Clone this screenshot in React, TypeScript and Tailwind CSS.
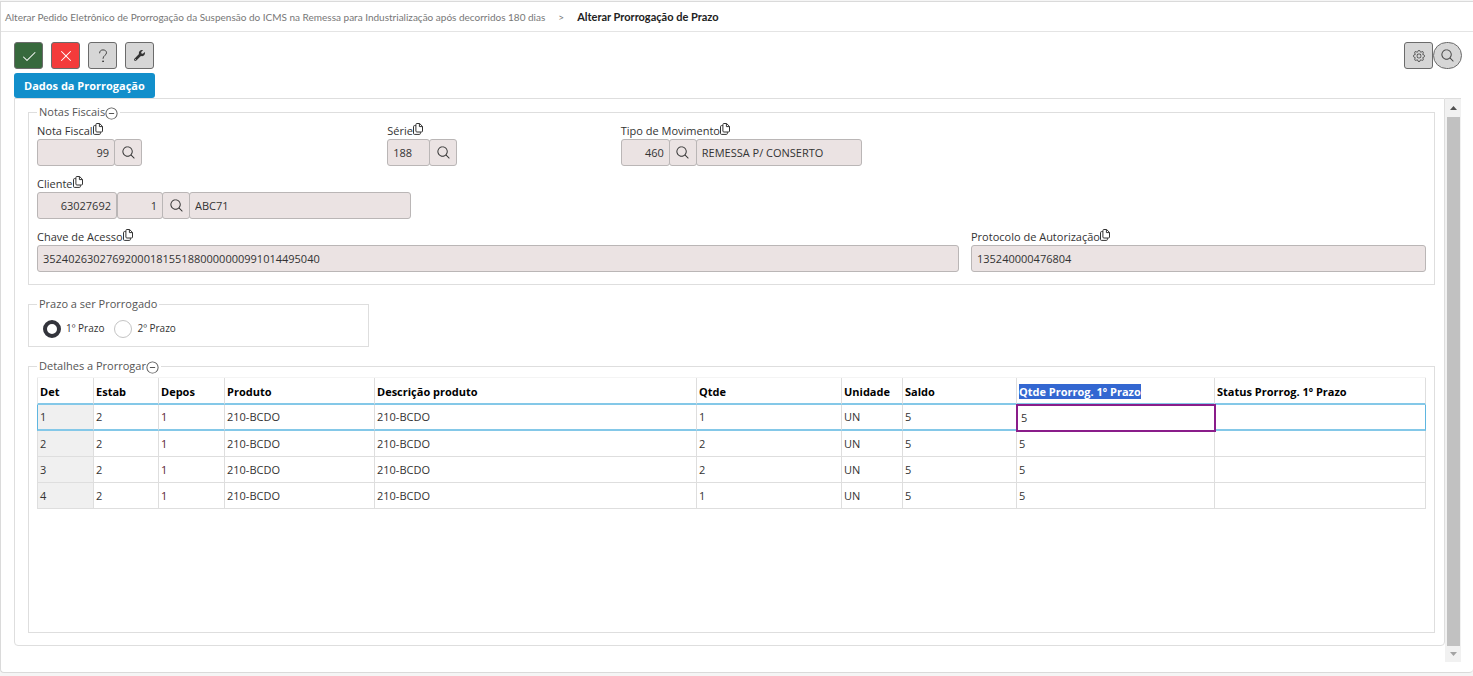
import { useState } from 'react';
import type { ReactNode } from 'react';
import { BsGear } from 'react-icons/bs';
import { FaWrench } from 'react-icons/fa';
import { PiCheck, PiMagnifyingGlass, PiMinusCircle, PiX } from 'react-icons/pi';

interface Detalhe {
  det: number;
  estab: string;
  depos: string;
  produto: string;
  descricao: string;
  qtde: string;
  unidade: string;
  saldo: string;
  prorrogado: string;
  status: string;
}

const detalhes: Detalhe[] = [
  { det: 1, estab: '2', depos: '1', produto: '210-BCDO', descricao: '210-BCDO', qtde: '1', unidade: 'UN', saldo: '5', prorrogado: '5', status: '' },
  { det: 2, estab: '2', depos: '1', produto: '210-BCDO', descricao: '210-BCDO', qtde: '2', unidade: 'UN', saldo: '5', prorrogado: '5', status: '' },
  { det: 3, estab: '2', depos: '1', produto: '210-BCDO', descricao: '210-BCDO', qtde: '2', unidade: 'UN', saldo: '5', prorrogado: '5', status: '' },
  { det: 4, estab: '2', depos: '1', produto: '210-BCDO', descricao: '210-BCDO', qtde: '1', unidade: 'UN', saldo: '5', prorrogado: '5', status: '' },
];

const columns = [
  { title: 'Det', width: 'w-[57px]' },
  { title: 'Estab', width: 'w-[65px]' },
  { title: 'Depos', width: 'w-[66px]' },
  { title: 'Produto', width: 'w-[150px]' },
  { title: 'Descrição produto', width: 'w-[322px]' },
  { title: 'Qtde', width: 'w-[145px]' },
  { title: 'Unidade', width: 'w-[61px]' },
  { title: 'Saldo', width: 'w-[114px]' },
  { title: 'Qtde Prorrog. 1º Prazo', width: 'w-[198px]', selected: true },
  { title: 'Status Prorrog. 1º Prazo', width: '' },
];

function CopyIcon() {
  return (
    <svg className="h-3 w-[10px]" viewBox="0 0 10 12" fill="none" stroke="currentColor" strokeWidth={1} strokeLinejoin="round">
      <path d="M3.9 0.5H6.6L9.5 3.4V8a1 1 0 0 1-1 1H3.9a1 1 0 0 1-1-1V1.5a1 1 0 0 1 1-1Z" />
      <path d="M6.4 0.6V3.6H9.4" />
      <path d="M2.8 2.6H1.5a1 1 0 0 0-1 1V10.4a1 1 0 0 0 1 1H6.4a1 1 0 0 0 1-1V9.2" />
    </svg>
  );
}

function QuestionIcon() {
  return (
    <svg className="h-[14px] w-[14px]" viewBox="0 0 14 14" fill="none" stroke="currentColor" strokeWidth={1} strokeLinecap="round">
      <path d="M3.6 3.9C3.6 2 5 0.9 7 0.9s3.5 1.1 3.5 2.9c0 2.6-3.5 2.6-3.5 5.6" />
      <circle cx="7" cy="12.3" r="0.5" fill="currentColor" />
    </svg>
  );
}

function ToolButton({ label, className, children }: { label: string; className: string; children: ReactNode }) {
  return (
    <button
      type="button"
      aria-label={label}
      className={`flex h-[27px] w-[29px] items-center justify-center border border-[#6b6b6b] ${className}`}
    >
      {children}
    </button>
  );
}

function Field({ id, label, className, children }: { id: string; label: string; className: string; children: ReactNode }) {
  return (
    <div className={className}>
      <div className="flex h-4 items-start text-[#333]">
        <label htmlFor={id}>{label}</label>
        <button type="button" aria-label={`Copiar ${label}`}>
          <CopyIcon />
        </button>
      </div>
      <div className="flex">{children}</div>
    </div>
  );
}

function TextBox({ id, label, value, className }: { id?: string; label?: string; value: string; className: string }) {
  return (
    <input
      id={id}
      aria-label={label}
      type="text"
      readOnly
      value={value}
      className={`h-[27px] min-w-0 rounded-[3px] border border-[#bab6b6] bg-[#ebe3e3] px-[5px] text-[#333] outline-none ${className}`}
    />
  );
}

function LookupButton({ label }: { label: string }) {
  return (
    <button
      type="button"
      aria-label={label}
      className="-ml-px flex h-[27px] w-7 shrink-0 items-center justify-center rounded-[3px] border border-[#bab6b6] bg-[#ebe3e3] pb-px text-[#333]"
    >
      <PiMagnifyingGlass className="h-[15px] w-[15px]" />
    </button>
  );
}

function Legend({ children, collapsible }: { children: ReactNode; collapsible?: boolean }) {
  return (
    <legend className="px-[2px] text-[#555]">
      <span className="flex h-4 items-center">
        {children}
        {collapsible && (
          <button type="button" aria-label="Recolher" className="-mx-px pt-[2px]">
            <PiMinusCircle className="h-[15px] w-[15px]" />
          </button>
        )}
      </span>
    </legend>
  );
}

export default function App() {
  const [prazo, setPrazo] = useState('1');
  const [qtde, setQtde] = useState(detalhes[0].prorrogado);

  return (
    <div className="flex min-h-screen flex-col bg-[#f5f5f5] pt-px pb-[3px] font-['Open_Sans','Noto_Sans',sans-serif] text-[11px] leading-4">
      <main className="flex-1 rounded-b border border-r-0 border-[#dadada] bg-white">
        <nav aria-label="Trilha" className="flex h-[30px] items-center gap-[13px] border-b border-[#e4e4e4] pl-1 font-[Lato,sans-serif]">
          <a href="#pedido" className="text-[10px] text-[#777]">
            Alterar Pedido Eletrônico de Prorrogação da Suspensão do ICMS na Remessa para Industrialização após decorridos 180 dias
          </a>
          <span className="text-[10px] text-[#777]">&gt;</span>
          <span className="font-bold text-[#222]">Alterar Prorrogação de Prazo</span>
        </nav>

        <div className="pt-[10px] pr-[11px] pl-[13px]">
          {/* Toolbar */}
          <div className="flex justify-between">
            <div className="flex gap-2">
              <ToolButton label="Confirmar" className="rounded-[3px] bg-[#37693d] text-white">
                <PiCheck className="h-4 w-4" />
              </ToolButton>
              <ToolButton label="Cancelar" className="rounded-[3px] bg-[#f33b3b] text-white">
                <PiX className="h-4 w-4" />
              </ToolButton>
              <ToolButton label="Ajuda" className="rounded-[3px] bg-[#d6d6d6] text-[#444]">
                <QuestionIcon />
              </ToolButton>
              <ToolButton label="Ferramentas" className="rounded-[3px] bg-[#d6d6d6] text-[#333]">
                <FaWrench className="h-[11px] w-[11px]" />
              </ToolButton>
            </div>
            <div className="flex">
              <ToolButton label="Configurações" className="rounded-[3px] bg-[#d6d6d6] text-[#444]">
                <BsGear className="h-3 w-3" />
              </ToolButton>
              <ToolButton label="Pesquisar" className="rounded-full bg-[#d6d6d6] text-[#444]">
                <PiMagnifyingGlass className="h-[15px] w-[15px]" />
              </ToolButton>
            </div>
          </div>

          <div role="tablist" className="mt-1 flex">
            <button
              type="button"
              role="tab"
              aria-selected="true"
              className="h-[25px] rounded-[3px] bg-[#128fcb] px-[10px] pt-px font-bold text-white"
            >
              Dados da Prorrogação
            </button>
          </div>

          <div className="flex pb-[10px]">
            <section className="mb-4 min-w-0 flex-1 rounded-b border border-[#dedede] pt-[5px] pr-[9px] pb-3 pl-[13px]">
              <fieldset className="border border-[#dedede] px-2 pt-[3px] pb-3">
                <Legend collapsible>Notas Fiscais</Legend>
                <div className="grid grid-cols-12 gap-x-3 gap-y-[10px]">
                  <Field id="nota" label="Nota Fiscal" className="col-span-3">
                    <TextBox id="nota" value="99" className="w-[78px] text-right" />
                    <LookupButton label="Buscar nota fiscal" />
                  </Field>
                  <Field id="serie" label="Série" className="col-span-2">
                    <TextBox id="serie" value="188" className="w-[43px]" />
                    <LookupButton label="Buscar série" />
                  </Field>
                  <Field id="movimento" label="Tipo de Movimento" className="col-span-7">
                    <TextBox id="movimento" value="460" className="w-[49px] text-right" />
                    <LookupButton label="Buscar tipo de movimento" />
                    <TextBox label="Descrição do movimento" value="REMESSA P/ CONSERTO" className="-ml-px w-[166px]" />
                  </Field>
                  <Field id="cliente" label="Cliente" className="col-span-12">
                    <TextBox id="cliente" value="63027692" className="w-[80px] text-right" />
                    <TextBox label="Filial do cliente" value="1" className="w-[46px] text-right" />
                    <LookupButton label="Buscar cliente" />
                    <TextBox label="Nome do cliente" value="ABC71" className="-ml-px w-[222px]" />
                  </Field>
                  <Field id="chave" label="Chave de Acesso" className="col-span-8">
                    <TextBox id="chave" value="35240263027692000181551880000000991014495040" className="flex-1" />
                  </Field>
                  <Field id="protocolo" label="Protocolo de Autorização" className="col-span-4">
                    <TextBox id="protocolo" value="135240000476804" className="flex-1" />
                  </Field>
                </div>
              </fieldset>

              <fieldset className="mt-[11px] w-[341px] border border-[#dedede] px-2 pb-2">
                <Legend>Prazo a ser Prorrogado</Legend>
                <div className="flex gap-[10px] pt-2 pl-[6px] text-[10px] text-[#333]">
                  {['1', '2'].map(p => (
                    <label key={p} className="flex items-start gap-[5px]">
                      <input
                        type="radio"
                        name="prazo"
                        checked={prazo === p}
                        onChange={() => setPrazo(p)}
                        className="h-[18px] w-[18px] appearance-none rounded-full border border-[#c4c4c4] bg-white checked:border-4 checked:border-[#33343c]"
                      />
                      {p}º Prazo
                    </label>
                  ))}
                </div>
              </fieldset>

              <fieldset className="mt-[11px] min-h-[275px] border border-[#dedede] px-2 pt-[3px]">
                <Legend collapsible>Detalhes a Prorrogar</Legend>
                <table className="w-full table-fixed border-separate border-spacing-0 border-t border-[#f4f4f4] text-left text-[#333]">
                  <thead>
                    <tr>
                      {columns.map(col => (
                        <th
                          key={col.title}
                          scope="col"
                          className={`h-[27px] border-r border-b-2 border-r-[#dedede] border-b-[#84c8e8] px-[2px] pt-[2px] font-bold whitespace-nowrap text-black first:border-l first:border-l-[#e6e6e6] ${col.width}`}
                        >
                          {col.selected ? <span className="bg-[#3367d1] text-white">{col.title}</span> : col.title}
                        </th>
                      ))}
                    </tr>
                  </thead>
                  <tbody>
                    {detalhes.map((row, i) => {
                      const cell = i === 0
                        ? 'h-[26px] border-r border-b-2 border-r-[#dedede] border-b-[#84c8e8] px-[2px] first:border-l first:border-l-[#5fb6e0] last:border-r-[#5fb6e0]'
                        : 'h-[26px] border-r border-b border-[#dedede] px-[2px] first:border-l';
                      return (
                        <tr key={row.det}>
                          <td className={`${cell} bg-[#f0f0f0]`}>{row.det}</td>
                          <td className={cell}>{row.estab}</td>
                          <td className={`${cell} text-[#5c1f33]`}>{row.depos}</td>
                          <td className={cell}>{row.produto}</td>
                          <td className={cell}>{row.descricao}</td>
                          <td className={cell}>{row.qtde}</td>
                          <td className={cell}>{row.unidade}</td>
                          <td className={cell}>{row.saldo}</td>
                          {i === 0 ? (
                            <td className="h-[26px] p-0">
                              <input
                                type="text"
                                aria-label="Qtde Prorrog. 1º Prazo"
                                value={qtde}
                                onChange={e => setQtde(e.target.value)}
                                className="block h-[26px] w-full bg-white px-1 pb-px outline-2 -outline-offset-1 outline-[#8a1d8a]"
                              />
                            </td>
                          ) : (
                            <td className={cell}>{row.prorrogado}</td>
                          )}
                          <td className={cell}>{row.status}</td>
                        </tr>
                      );
                    })}
                  </tbody>
                </table>
              </fieldset>
            </section>

            {/* Scroll track */}
            <div className="mr-px flex w-4 flex-col items-center border-t border-[#dedede] bg-[#f1f1f1]">
              <button type="button" aria-label="Rolar para cima" className="flex h-[18px] w-full items-center justify-center text-[#505050]">
                <svg className="h-1 w-[7px]" viewBox="0 0 7 4" fill="currentColor">
                  <path d="M3.5 0L7 4H0Z" />
                </svg>
              </button>
              <div className="w-[13px] flex-1 bg-[#c1c1c1]" />
              <button type="button" aria-label="Rolar para baixo" className="flex h-4 w-full items-center justify-center text-[#a3a3a3]">
                <svg className="h-1 w-[7px]" viewBox="0 0 7 4" fill="currentColor">
                  <path d="M3.5 4L7 0H0Z" />
                </svg>
              </button>
            </div>
          </div>
        </div>
      </main>
    </div>
  );
}
